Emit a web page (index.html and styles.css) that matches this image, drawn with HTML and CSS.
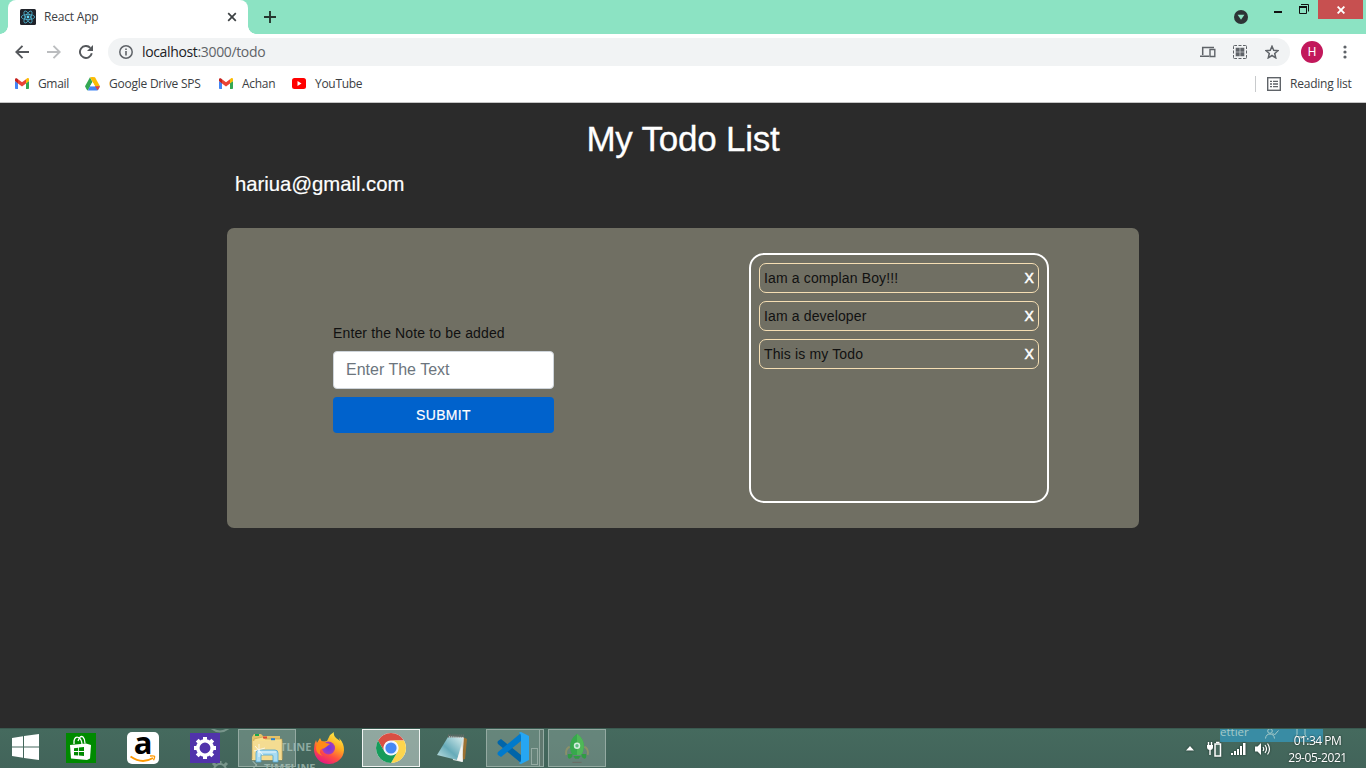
FILE: index.html
```html
<!DOCTYPE html>
<html lang="en">
<head>
<meta charset="utf-8">
<title>React App</title>
<link rel="stylesheet" href="styles.css">
</head>
<body>
<svg class="defs" width="0" height="0">
  <symbol id="gmail" viewBox="0 0 14 11">
    <path fill="#4285f4" d="M0 3v7.2q0 .8.8.8H3V5z"/>
    <path fill="#34a853" d="M11 5v6h2.2q.8 0 .8-.8V3z"/>
    <path fill="#fbbc04" d="M11 1.2V5.4L14 3V1.5C14 0 12.4-.4 11.500.700z"/>
    <path fill="#ea4335" d="M3 5.400V1.200L7 4.200l4-3v4.200l-4 3z"/>
    <path fill="#c5221f" d="M0 1.500V3l3 2.400V1.200L2.400.700C1.400-.200 0 .200 0 1.500z"/>
  </symbol>
</svg>

<header class="browser">
  <div class="tabstrip">
    <div class="tab">
      <svg class="favicon" width="16" height="16" viewBox="0 0 16 16"><rect width="16" height="16" rx="1.500" fill="#20232a"/><g fill="none" stroke="#4fb4d0" stroke-width=".8"><ellipse cx="8" cy="8" rx="6.700" ry="2.600"/><ellipse cx="8" cy="8" rx="6.700" ry="2.600" transform="rotate(60 8 8)"/><ellipse cx="8" cy="8" rx="6.700" ry="2.600" transform="rotate(120 8 8)"/></g><circle cx="8" cy="8" r="1.400" fill="#61dafb"/></svg>
      <span class="tab-title">React App</span>
      <svg class="tab-close" width="10" height="10" viewBox="0 0 10 10"><path d="M1.200 1.200l7.600 7.600M8.800 1.200L1.200 8.800" stroke="#3c4043" stroke-width="1.700"/></svg>
    </div>
    <svg class="new-tab" width="12" height="12" viewBox="0 0 12 12"><path d="M6 0v12M0 6h12" stroke="#25372f" stroke-width="1.900"/></svg>
    <svg class="tab-search" width="14" height="14" viewBox="0 0 14 14"><circle cx="7" cy="7" r="7" fill="#2d3436"/><path d="M3.600 4.800h6.800L7 9.700z" fill="#8ce3c3"/></svg>
    <svg class="minimize" width="8" height="2" viewBox="0 0 8 2"><path d="M0 1h8" stroke="#111" stroke-width="2"/></svg>
    <svg class="restore" width="10" height="10" viewBox="0 0 10 10"><path d="M2 .500h7.500V7.500M.500 3h7v6.500h-7z" fill="none" stroke="#111"/><path d="M0 3h8" stroke="#111" stroke-width="2"/></svg>
    <div class="close"><svg width="8" height="8" viewBox="0 0 8 8"><path d="M.600.600l6.800 6.800M7.400.600L.600 7.400" stroke="#fff" stroke-width="1.900"/></svg></div>
  </div>

  <div class="toolbar">
    <svg class="back" width="14" height="14" viewBox="0 0 14 14"><path d="M14 7H1.500M7.500.800L1.300 7l6.200 6.200" fill="none" stroke="#55585c" stroke-width="1.900"/></svg>
    <svg class="forward" width="14" height="14" viewBox="0 0 14 14"><path d="M0 7h12.500M6.500.800L12.700 7l-6.200 6.200" fill="none" stroke="#bbbdbf" stroke-width="1.900"/></svg>
    <svg class="reload" width="14" height="14" viewBox="0 0 14 14"><path d="M12.800 8.300A6 6 0 1 1 11.300 2.800" fill="none" stroke="#55585c" stroke-width="1.900"/><path d="M14 0v6H8z" fill="#55585c"/></svg>
    <div class="omnibox">
      <svg width="14" height="14" viewBox="0 0 14 14"><circle cx="7" cy="7" r="6.200" fill="none" stroke="#5f6368" stroke-width="1.500"/><path d="M7 6v4.500M7 3.400v1.600" stroke="#5f6368" stroke-width="1.600"/></svg>
      <span class="url"><b>localhost</b>:3000/todo</span>
      <svg class="devices" width="16" height="12" viewBox="0 0 16 12"><path d="M2.700 9V1.600H14M0 10.200h9" fill="none" stroke="#5f6368" stroke-width="1.500"/><path d="M10 3.500h4.800v7H10z" fill="none" stroke="#5f6368" stroke-width="1.400"/></svg>
      <svg class="qr" width="14" height="14" viewBox="0 0 14 14"><path d="M.500 4V1.500q0-1 1-1H4M10 .500h2.500q1 0 1 1V4M13.500 10v2.500q0 1-1 1H10M4 13.500H1.500q-1 0-1-1V10M5.500 .500h3M5.500 13.500h3M.500 5.500v3M13.500 5.500v3" fill="none" stroke="#5f6368"/><path d="M2.700 2.700h4v4h-4zM7.300 2.700h4v4h-4zM2.700 7.300h4v4h-4zM7.300 7.300h4v4h-4z" fill="#5f6368"/></svg>
      <svg class="star" width="14" height="14" viewBox="0 0 14 14"><path d="M7 1.300l1.700 4 4.300.400-3.300 2.800 1 4.300L7 10.500l-3.700 2.300 1-4.300L1 5.700l4.300-.400z" fill="none" stroke="#5f6368" stroke-width="1.500"/></svg>
    </div>
    <div class="avatar">H</div>
    <svg class="menu" width="4" height="14" viewBox="0 0 4 14" fill="#5f6368"><circle cx="2" cy="2" r="1.600"/><circle cx="2" cy="7" r="1.600"/><circle cx="2" cy="12" r="1.600"/></svg>
  </div>

  <nav class="bookmarks">
    <svg class="bm-icon" width="14" height="11"><use href="#gmail"/></svg><span class="bm bm-gmail">Gmail</span>
    <svg class="bm-icon" width="15" height="14" viewBox="0 0 15 14"><path fill="#34a853" d="M5 .300L7.500 5 2.800 13.500Q2 13.500 0 9.200z"/><path fill="#fbbc04" d="M5 .300Q7.500-.300 10 .300L15 9.200H10z"/><path fill="#4285f4" d="M5 9.200h10q-2 4.300-2.800 4.300H2.800z"/><path fill="#ea4335" d="M10 9.200h5l-2.300 4z"/><path fill="#fff" d="M7.500 5l2.500 4.200H5z"/></svg><span class="bm bm-drive">Google Drive SPS</span>
    <svg class="bm-icon" width="14" height="11"><use href="#gmail"/></svg><span class="bm bm-achan">Achan</span>
    <svg class="bm-icon" width="14" height="11" viewBox="0 0 14 11"><rect width="14" height="11" rx="2.500" fill="#f00"/><path d="M5.500 3v5l4-2.500z" fill="#fff"/></svg><span class="bm bm-youtube">YouTube</span>
    <div class="reading">
      <svg width="14" height="14" viewBox="0 0 14 14"><rect x=".700" y=".700" width="12.600" height="12.600" fill="none" stroke="#5f6368" stroke-width="1.400"/><path d="M3 4.300h2M3 7h2M3 9.700h2M6 4.300h5M6 7h5M6 9.700h5" stroke="#5f6368" stroke-width="1.300"/></svg>
      <span class="bm bm-reading">Reading list</span>
    </div>
  </nav>
</header>

<main class="app">
  <h1>My Todo List</h1>
  <p class="email">hariua@gmail.com</p>
  <section class="board">
    <form class="entry">
      <label for="note">Enter the Note to be added</label>
      <input id="note" type="text" placeholder="Enter The Text">
      <button type="button">SUBMIT</button>
    </form>
    <ul class="todos">
      <li><span>Iam a complan Boy!!!</span><b>X</b></li>
      <li><span>Iam a developer</span><b>X</b></li>
      <li><span>This is my Todo</span><b>X</b></li>
    </ul>
  </section>
</main>

<footer class="taskbar">
  <div class="ghost ghost-gear"><svg width="22" height="40" viewBox="0 0 22 40" fill="none" stroke="#78958a" stroke-width="2"><path d="M2 0q9 7 18 0"/><circle cx="11" cy="42" r="6"/><path d="M11 33v4M4 35l3 3M18 35l-3 3" stroke-width="3"/></svg></div>
  <div class="ghost ghost-outline">OUTLINE</div>
  <div class="ghost ghost-timeline"><i></i>TIMELINE</div>
  <div class="ghost ghost-status"><span>ettier</span><svg width="14" height="11" viewBox="0 0 14 11" fill="none" stroke="#a5cac9"><circle cx="5" cy="3" r="2.300"/><path d="M.500 10.500Q1 6 5 6t4.500 4.500M7.500 5l2 2 4-4.500"/></svg><svg width="12" height="10" viewBox="0 0 12 10" fill="none" stroke="#a5cac9"><path d="M2 0v7L.500 8.500h11L10 7V0M5 9.500h2"/></svg></div>

  <div class="start"><svg width="27" height="26" viewBox="0 0 27 26" fill="#fff"><path d="M0 4l11-1.700v10.200H0zM12 2.100L27 0v12.500H12zM0 13.500h11v10.200L0 22zM12 13.500h15V26l-15-2.100z"/></svg></div>
  <div class="slot"><svg width="30" height="30" viewBox="0 0 30 30"><rect width="30" height="30" fill="#008a00"/><path d="M4 12l16-1.500 5 1.500-1 13.500-3 1.500L5 25.500z" fill="#fff"/><path d="M8 11V8q1-5 4.500-3.500Q15.500 6 16 11M12 8q2-6 5-4 2 2 2 6.500" fill="none" stroke="#fff" stroke-width="1.300"/><path d="M8 15.200l4.200-.500V18H8zM13 14.600l5-.600v4h-5zM8 19h4.200v3.600L8 22.300zM13 19h5v4l-5-.400z" fill="#008a00"/></svg></div>
  <div class="slot"><div class="amazon"><span>a</span><svg width="26" height="8" viewBox="0 0 26 8" fill="none" stroke="#f90"><path d="M.500 1.500Q12 9.500 23 3" stroke-width="1.900"/><path d="M20 1q4-.500 4.500.300t-1 4" stroke-width="1.400"/></svg></div></div>
  <div class="slot"><svg width="30" height="30" viewBox="0 0 30 30"><rect width="30" height="30" fill="#5133ab"/><circle cx="15" cy="15" r="7.200" fill="none" stroke="#fff" stroke-width="3.500"/><g stroke="#fff" stroke-width="4"><path d="M15 4v4M15 22v4M4 15h4M22 15h4M7.200 7.200l2.800 2.800M20 20l2.800 2.800M22.800 7.200l-2.800 2.800M10 20l-2.800 2.800"/></g></svg></div>
  <div class="slot"><div class="task"><svg width="32" height="30" viewBox="0 0 32 30"><path d="M1 4l2-3h7l2 2h17v20H1z" fill="#e3c269"/><path d="M4 2h4" stroke="#19a64a" stroke-width="2"/><path d="M3 6l9-2 2 2h17v21H1z" fill="#f7df8e" stroke="#c59b48" stroke-width=".6"/><path d="M12 4.500h4" stroke="#db4938" stroke-width="2"/><path d="M20 6.200h4" stroke="#2b82cf" stroke-width="2"/><path d="M1 8h30v19H1z" fill="#f4dc92"/><path d="M1.300 8v18M31 8v18" stroke="#c9a557" stroke-width=".6"/><path d="M5 29V20q0-3 3-3h16q3 0 3 3v9h-5v-6q0-1-1-1H11q-1 0-1 1v6z" fill="#a9dcf2" stroke="#4fa5d2" stroke-width=".8"/><path d="M7 19h18M3 18l11-3M8 11v13M4 13l8 9" stroke="#fff" stroke-opacity=".75"/></svg></div></div>
  <div class="slot"><svg width="32" height="32" viewBox="0 0 32 32"><defs><linearGradient id="fire" x1=".8" y1="0" x2=".3" y2="1"><stop stop-color="#fff44f"/><stop offset=".4" stop-color="#ffad1f"/><stop offset=".7" stop-color="#ff4d42"/><stop offset="1" stop-color="#e31587"/></linearGradient><radialGradient id="globe"><stop stop-color="#6b36e4"/><stop offset="1" stop-color="#a83db8"/></radialGradient></defs><path d="M3 8l1 3 3-5 2 4 5-1 3-6 4-3q-1 3 2 6l4 3-1-3q5 5 5 12A15 14.500 0 0 1 1 17Q1 12 3 8z" fill="url(#fire)"/><circle cx="15.500" cy="16" r="6.500" fill="url(#globe)"/><path d="M4 11q5-4 9 0l4 1-4 3q-2 2-5 2-3 4 2 7-7-2-7-8z" fill="#ff8a16"/></svg></div>
  <div class="slot"><div class="task active"><svg width="30" height="30" viewBox="0 0 30 30"><circle cx="15" cy="15" r="15" fill="#fff"/><path d="M2.010 7.500A15 15 0 0 1 27.990 7.500H15A7.500 7.500 0 0 0 8.500 18.750z" fill="#d94f43"/><path d="M27.990 7.500A15 15 0 0 1 15 30l6.500-11.250A7.500 7.500 0 0 0 15 7.500z" fill="#fdd54d"/><path d="M15 30A15 15 0 0 1 2.010 7.500L8.500 18.750a7.500 7.500 0 0 0 13 0z" fill="#169b5b"/><circle cx="15" cy="15" r="7" fill="#eef3ff"/><circle cx="15" cy="15" r="5.600" fill="#4688f4"/></svg></div></div>
  <div class="slot"><svg width="32" height="30" viewBox="0 0 32 30"><path d="M26 4l4 2-2 20-7 2z" fill="#9c7132"/><path d="M11 3l16 1-2 25-9-2z" fill="#d9e1df"/><defs><linearGradient id="pad" x1="1" y1="0" x2="0" y2="1"><stop stop-color="#d8eeee"/><stop offset=".55" stop-color="#66abb9"/><stop offset="1" stop-color="#c8e5e5"/></linearGradient></defs><path d="M11 4l15 1-6 22L0 22z" fill="url(#pad)"/><path d="M20 27l5-15 1 17z" fill="#f4f5f3"/><path d="M11 3h16" stroke="#646c68" stroke-width="3" stroke-dasharray="1.300 .8"/></svg></div>
  <div class="slot"><div class="task vscode"><svg width="32" height="32" viewBox="0 0 32 32"><path d="M1 9l3-2 20 16v8L1 12q-1-1.500 0-3z" fill="#0065a9"/><path d="M1 23l3 2L24 9V1L1 20q-1 1.500 0 3z" fill="#007acc"/><path d="M24 0l8 4v24l-8 4q-1.500 0-2-1 2-.500 2-3V4q0-2.500-2-3 .5-1 2-1z" fill="#26a6f2"/></svg><i class="preview"></i></div><i class="stack"></i></div>
  <div class="slot"><div class="task"><svg width="24" height="31" viewBox="0 0 26 32"><path d="M5 14q-5 3-3.500 9M21 14q5 3 3.500 9" fill="none" stroke="#8b9168" stroke-width="2"/><path d="M13 0q8 6 7.500 14-.5 6-3 9h-9q-3-3-3-9Q5 6 13 0z" fill="#36a94c"/><path d="M13 0q8 6 7.500 14-.5 6-3 9H13z" fill="#4fb757"/><circle cx="13" cy="13" r="3.500" fill="#d3eddd"/><circle cx="13" cy="13" r="1.800" fill="#5dbd81"/><path d="M3 22h5v3q-4 4-5 0zM23 22h-5v3q4 4 5 0zM9 24h8l-2 3h-4z" fill="#309c43"/><path d="M8 31h10" stroke="#6b6962"/></svg></div></div>

  <div class="tray">
    <svg width="8" height="5" viewBox="0 0 8 5"><path d="M4 0l4 4.500H0z" fill="#fff"/></svg>
    <svg class="power" width="15" height="16" viewBox="0 0 15 16"><path d="M1.500 1v4M4.500 1v4M3 8v6" fill="none" stroke="#fff" stroke-width="1.400"/><path d="M0 4h6v2q0 3-3 3T0 6z" fill="#fff"/><path d="M8 3h5.500v12H8z" fill="#49695f" stroke="#fff" stroke-width="1.500"/><path d="M9 1.500h3.500" stroke="#fff" stroke-width="1.500"/></svg>
    <svg class="signal" width="15" height="12" viewBox="0 0 15 12" fill="#fff"><path d="M0 10h2v2H0zM3 8h2v4H3zM6 6h2v6H6zM9 3h2v9H9zM12 0h2.500v12H12z"/></svg>
    <svg class="sound" width="16" height="14" viewBox="0 0 16 14"><path d="M0 4.500h2.500L6 1v12L2.500 9.500H0z" fill="#fff"/><path d="M8 5q1.500 2 0 4M10 3q3 4 0 8M12.500 1.500q4 5.500 0 11" fill="none" stroke="#fff" stroke-width="1.200"/></svg>
    <div class="clock"><span class="time">01:34 PM</span><span class="date">29-05-2021</span></div>
  </div>
</footer>
</body>
</html>
```

FILE: styles.css
```css
* { box-sizing: border-box; }
body { margin: 0; width: 1366px; height: 768px; overflow: hidden; display: flex; flex-direction: column; background: #2b2b2b; font-family: "Liberation Sans", Arial, sans-serif; }
svg { display: block; flex: none; }
.defs { position: absolute; }

.browser { height: 103px; flex: none; background: #fff; border-bottom: 1px solid #c5c5c5; font-family: "Open Sans", "Noto Sans", sans-serif; color: #3c4043; white-space: nowrap; }
.tabstrip { height: 34px; background: #8ce3c3; display: flex; align-items: flex-start; padding-left: 8px; }
.tab { position: relative; width: 240px; height: 34px; background: #fff; border-radius: 8px 8px 0 0; display: flex; align-items: center; padding: 0 11px 0 12px; }
.tab::before, .tab::after { content: ""; position: absolute; bottom: 0; width: 8px; height: 8px; }
.tab::before { left: -8px; background: radial-gradient(circle at 0 0, transparent 7.500px, #fff 8px); }
.tab::after { right: -8px; background: radial-gradient(circle at 100% 0, transparent 7.500px, #fff 8px); }
.tab-title { font-size: 12px; margin-left: 8px; letter-spacing: -.2px; padding-bottom: 1px; }
.tab-close { margin-left: auto; }
.new-tab { margin: 11px 0 0 16px; }
.tab-search { margin: 10px 0 0 auto; }
.minimize { margin: 11px 0 0 26px; }
.restore { margin: 4px 9px 0 17px; }
.close { width: 45px; height: 19px; margin-right: 3px; background: #c75050; display: grid; place-items: center; }

.toolbar { height: 36px; display: flex; align-items: center; padding-left: 15px; }
.forward { margin-left: 18px; }
.reload { margin-left: 18px; }
.omnibox { width: 1182px; height: 28px; margin-left: 15px; border-radius: 14px; background: #f1f3f4; display: flex; align-items: center; padding: 0 11px; }
.url { font-size: 14px; margin-left: 9px; color: #5f6368; letter-spacing: -.35px; padding-bottom: 1px; }
.url b { font-weight: 400; color: #202124; }
.devices { margin-left: auto; }
.qr { margin-left: 17px; }
.star { margin: 0 0 0 18px; }
.avatar { width: 22px; height: 22px; margin-left: 11px; border-radius: 50%; background: #c2185b; color: #fff; font: 12px/22px Roboto, sans-serif; text-align: center; }
.menu { margin-left: 20px; }

.bookmarks { height: 28px; display: flex; align-items: center; padding: 0 14px 0 15px; }
.bm { font-size: 12px; margin-left: 9px; padding-bottom: 1px; }
.bm-icon { margin-bottom: 1px; }
.bm-gmail { width: 47px; letter-spacing: -.35px; }
.bm-drive { width: 110px; letter-spacing: -.24px; }
.bm-achan { width: 50px; letter-spacing: -.3px; }
.bm-youtube { letter-spacing: -.3px; }
.reading { margin-left: auto; height: 16px; padding-left: 11px; border-left: 1px solid #c8cacc; display: flex; align-items: center; }
.bm-reading { width: 62px; letter-spacing: -.22px; }

.app { height: 625px; flex: none; display: flex; flex-direction: column; align-items: center; color: #fff; }
h1 { margin: 15px 0 0; font-size: 35px; line-height: 42px; font-weight: 400; letter-spacing: -.22px; -webkit-text-stroke: .3px #fff; }
.email { width: 912px; margin: 12px 0 0; padding-left: 8px; font-size: 20.300px; line-height: 24px; -webkit-text-stroke: .2px #fff; }
.board { width: 912px; height: 300px; margin-top: 32px; border-radius: 7px; background: #706f63; display: flex; padding: 25px 90px 25px 106px; justify-content: space-between; }
.entry { width: 221px; padding-top: 70px; display: flex; flex-direction: column; color: #111; }
.entry label { font-size: 14px; line-height: 20px; letter-spacing: .14px; white-space: nowrap; }
.entry input { height: 38px; margin: 8px 0; padding: 0 12px; border: 1px solid #ced4da; border-radius: 4px; background: #fff; font: 16px "Liberation Sans", Arial, sans-serif; }
.entry input::placeholder { color: #6c757d; opacity: 1; }
.entry button { height: 36px; border: 0; padding: 0; border-radius: 4px; background: #0062cc; color: #fff; font: 14px "Liberation Sans", Arial, sans-serif; letter-spacing: .35px; -webkit-text-stroke: .2px #fff; }
.todos { width: 300px; height: 250px; margin: 0; padding: 8px; border: 2px solid #fff; border-radius: 15px; list-style: none; color: #111; }
.todos li { height: 30px; margin-bottom: 8px; padding: 0 4px; border: 1px solid #f5deb3; border-radius: 7px; display: flex; justify-content: space-between; align-items: center; font-size: 14px; letter-spacing: .14px; }
.todos b { color: #fff; font-weight: 400; -webkit-text-stroke: .5px #fff; }

.taskbar { position: relative; height: 40px; flex: none; background: linear-gradient(#456a5e, #42645a); border-top: 1px solid #3a5a50; display: flex; align-items: center; overflow: hidden; }
.start { width: 50px; padding: 0 0 3px 12px; }
.slot { position: relative; width: 62px; height: 39px; padding-bottom: 1px; display: grid; place-items: center; }
.task { position: relative; width: 58px; height: 38px; margin-right: 1px; border: 1px solid #94aaa2; background: rgba(190, 207, 200, .28); display: grid; place-items: center; }
.active { border-color: #f0f4f2; background: rgba(220, 229, 225, .5); }
.task.vscode { width: 54px; margin-right: 5px; }
.preview { position: absolute; right: 1px; bottom: 1px; width: 7px; height: 17px; border: 1px solid #94aaa2; }
.stack { position: absolute; left: 56px; top: 0; width: 4px; height: 38px; border: 1px solid #94aaa2; border-left: 0; background: #60786f; }
.amazon { width: 32px; height: 32px; border-radius: 5px; background: #fff; color: #000; display: flex; flex-direction: column; align-items: center; }
.amazon span { font: bold 31px/23px "Open Sans", sans-serif; height: 23px; margin-top: -1px; }
.amazon svg { margin-top: 1px; }
.ghost { position: absolute; color: #8eaaa0; font: bold 11px/14px "Open Sans", sans-serif; white-space: nowrap; }
.ghost-gear { left: 209px; top: -1px; }
.ghost-outline { left: 263px; top: 11px; }
.ghost-timeline { left: 264px; top: 32px; }
.ghost-timeline i { position: absolute; left: -14px; top: 1px; width: 6px; height: 6px; border: solid #8eaaa0; border-width: 1px 1px 0 0; transform: rotate(45deg); }
.ghost-status { left: 1220px; top: -1px; width: 103px; height: 14px; background: #398ca4; color: #a5cac9; font-weight: 400; font-size: 11.500px; line-height: 8px; display: flex; }
.ghost-status span { width: 45px; }
.ghost-status svg + svg { margin-left: 16px; }
.tray { position: relative; margin-left: auto; margin-right: 16px; display: flex; align-items: center; color: #fff; height: 39px; filter: drop-shadow(0 0 1px #1c2d27); }
.power { margin-left: 13px; }
.signal { margin-left: 9px; }
.sound { margin-left: 9px; }
.clock { width: 65px; margin-left: 14px; display: flex; flex-direction: column; align-items: center; font: 12px/17px "Open Sans", sans-serif; white-space: nowrap; }
.time { letter-spacing: -.5px; }
.date { letter-spacing: -.4px; }
```
